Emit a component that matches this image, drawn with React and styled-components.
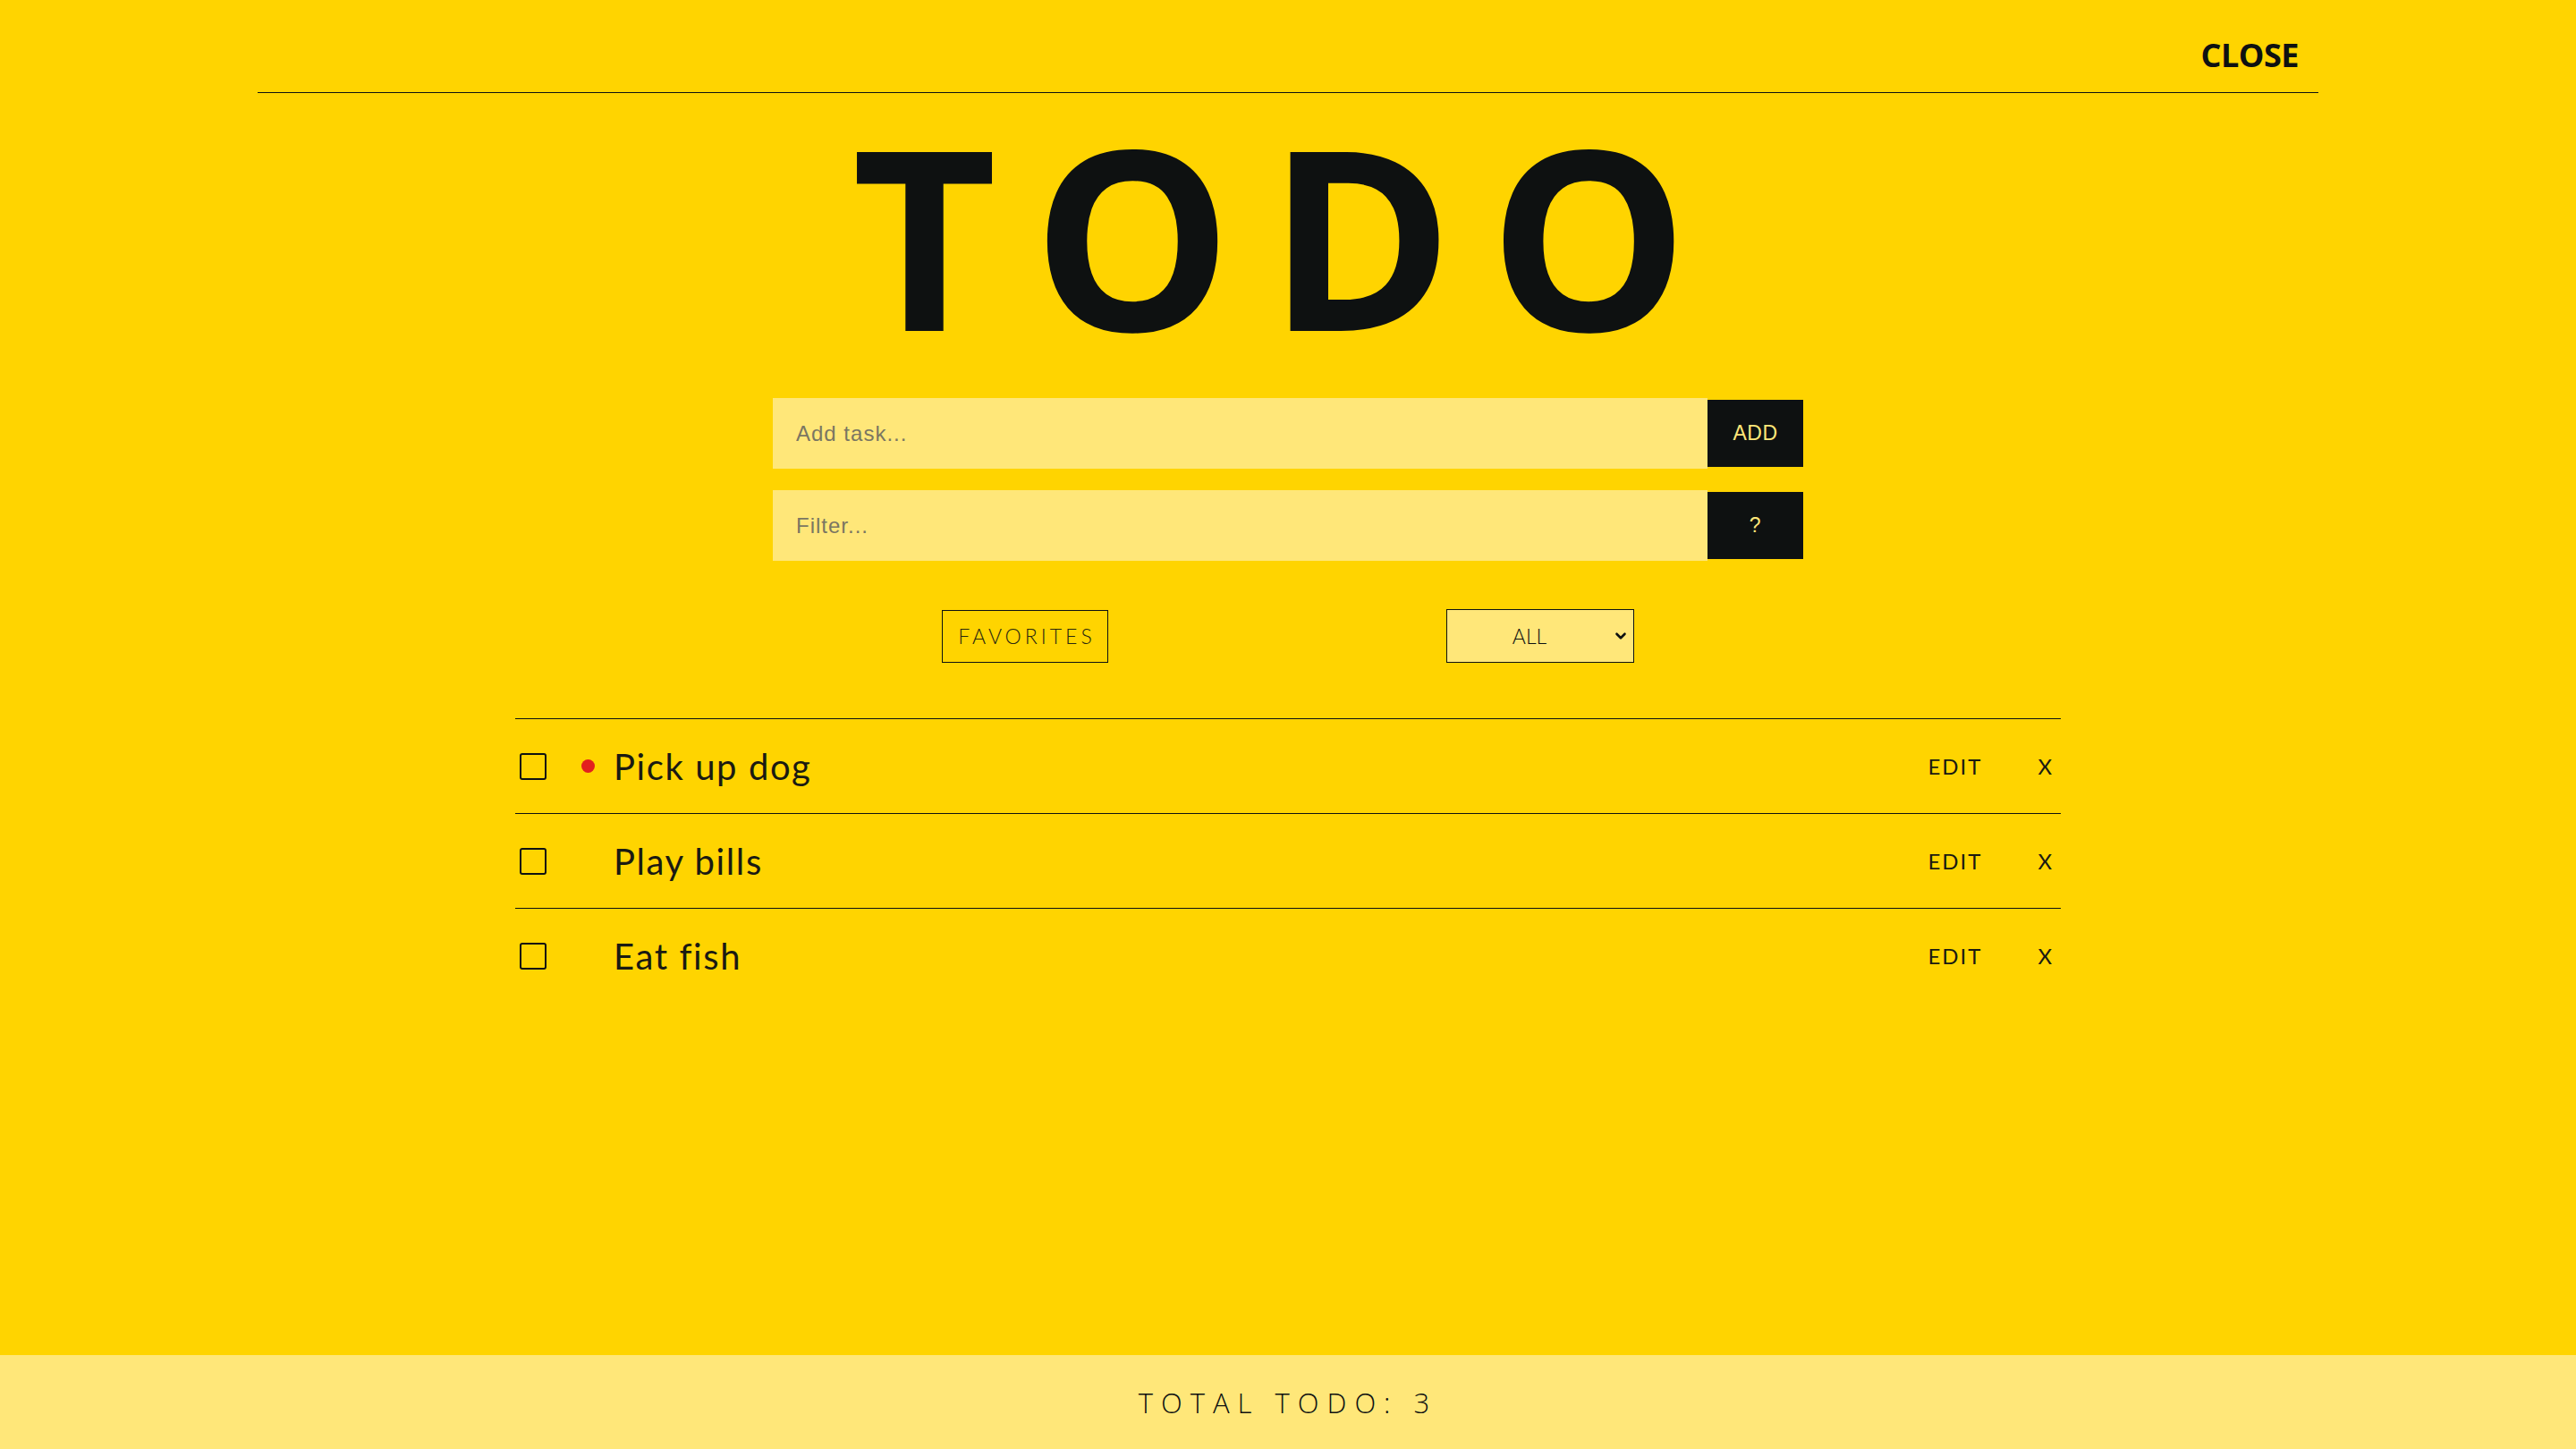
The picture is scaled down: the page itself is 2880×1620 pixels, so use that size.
import React from "react";
import styled, { createGlobalStyle } from "styled-components";
import { ChevronDown } from "lucide-react";

const GlobalStyle = createGlobalStyle`
  body {
    margin: 0;
    background-color: #ffd400;
    font-family: "Lato", "Open Sans", sans-serif;
    color: #0e1111;
  }
`;

const Page = styled.div`
  min-height: 100vh;
  display: flex;
  flex-direction: column;
`;

const Header = styled.header`
  width: 80%;
  height: 104px;
  margin: 0 auto;
  box-sizing: border-box;
  padding: 20px 22px 0 0;
  display: flex;
  justify-content: flex-end;
  align-items: center;
  border-bottom: 1px solid #0e1111;
`;

const CloseButton = styled.button`
  background: none;
  border: none;
  padding: 0;
  cursor: pointer;
  font-family: "Open Sans", sans-serif;
  font-weight: 700;
  font-size: 36px;
  letter-spacing: -0.5px;
  color: #0e1111;
`;

const Title = styled.h1`
  margin: 18px 0 0;
  text-align: center;
  font-family: "Open Sans", sans-serif;
  font-weight: 700;
  font-size: 280px;
  line-height: 1;
  letter-spacing: 40px;
  color: #0e1111;
`;

const Form = styled.div`
  width: 40%;
  margin: 43px auto 0;
  display: flex;
  flex-direction: column;
  gap: 24px;
`;

const FieldRow = styled.div`
  display: flex;
  align-items: center;
`;

const TextInput = styled.input`
  flex: 1;
  height: 79px;
  box-sizing: border-box;
  border: none;
  outline: none;
  padding: 0 26px;
  background-color: #ffe779;
  font-family: "Liberation Sans", Arial, sans-serif;
  font-size: 24px;
  letter-spacing: 1px;
  color: #0e1111;
  &::placeholder {
    color: #7a7662;
  }
`;

const SquareButton = styled.button`
  width: 107px;
  height: 75px;
  border: none;
  background-color: #0e1111;
  color: #ffe779;
  font-family: "Liberation Sans", Arial, sans-serif;
  font-size: 23px;
  letter-spacing: 0.5px;
  cursor: pointer;
`;

const Controls = styled.div`
  width: 40%;
  margin: 54px auto 0;
  display: flex;
  justify-content: space-around;
  align-items: center;
`;

const FavoritesButton = styled.button`
  width: 186px;
  height: 59px;
  border: 1px solid #0e1111;
  background: transparent;
  font-family: "Lato", sans-serif;
  font-weight: 300;
  font-size: 23px;
  letter-spacing: 4px;
  padding: 0 0 0 4px;
  color: #2a2810;
  cursor: pointer;
`;

const SelectWrap = styled.div`
  position: relative;
  width: 210px;
  height: 60px;
`;

const FilterSelect = styled.select`
  appearance: none;
  width: 100%;
  height: 100%;
  box-sizing: border-box;
  border: 1px solid #0e1111;
  border-radius: 0;
  padding: 0 24px 0 0;
  background-color: #ffe779;
  font-family: "Lato", sans-serif;
  font-weight: 300;
  font-size: 23px;
  text-align: center;
  text-align-last: center;
  color: #0e1111;
`;

const SelectArrow = styled(ChevronDown)`
  position: absolute;
  right: 6px;
  top: 50%;
  transform: translateY(-50%);
  pointer-events: none;
  color: #0e1111;
`;

const List = styled.ul`
  width: 60%;
  margin: 62px auto 0;
  padding: 0;
  list-style: none;
`;

const Row = styled.li`
  height: 106px;
  box-sizing: border-box;
  border-top: 1px solid #0e1111;
  padding: 0 10px 0 5px;
  display: flex;
  align-items: center;
`;

const Check = styled.input`
  appearance: none;
  width: 30px;
  height: 30px;
  margin: 0;
  border: 2px solid #0e1111;
  border-radius: 3px;
  background: transparent;
  cursor: pointer;
`;

const Dot = styled.span`
  width: 15px;
  height: 15px;
  margin-left: 39px;
  border-radius: 50%;
  background-color: ${(props) => (props.$visible ? "#e3201e" : "transparent")};
`;

const ItemText = styled.span`
  flex: 1;
  margin-left: 21px;
  font-family: "Lato", sans-serif;
  font-weight: 400;
  font-size: 40px;
  letter-spacing: 1.6px;
  color: #1a1a12;
`;

const Actions = styled.div`
  display: flex;
  align-items: center;
  gap: 62px;
`;

const ActionButton = styled.button`
  background: none;
  border: none;
  padding: 0;
  font-family: "Lato", sans-serif;
  font-weight: 400;
  font-size: 24px;
  letter-spacing: ${(props) => (props.$wide ? "2px" : "0")};
  color: #1a1a12;
  cursor: pointer;
`;

const Footer = styled.footer`
  margin-top: auto;
  height: 105px;
  display: flex;
  justify-content: center;
  align-items: center;
  background-color: #ffe779;
  font-family: "Open Sans", sans-serif;
  font-weight: 300;
  font-size: 31px;
  letter-spacing: 9px;
  color: #0e1111;
`;

const todos = [
  { id: 1, text: "Pick up dog", favorite: true },
  { id: 2, text: "Play bills", favorite: false },
  { id: 3, text: "Eat fish", favorite: false },
];

const App = () => {
  return (
    <Page>
      <GlobalStyle />
      <Header>
        <CloseButton>CLOSE</CloseButton>
      </Header>
      <Title>TODO</Title>
      <Form>
        <FieldRow>
          <TextInput placeholder="Add task..." />
          <SquareButton>ADD</SquareButton>
        </FieldRow>
        <FieldRow>
          <TextInput placeholder="Filter..." />
          <SquareButton>?</SquareButton>
        </FieldRow>
      </Form>
      <Controls>
        <FavoritesButton>FAVORITES</FavoritesButton>
        <SelectWrap>
          <FilterSelect defaultValue="all">
            <option value="all">ALL</option>
            <option value="done">DONE</option>
            <option value="todo">TODO</option>
          </FilterSelect>
          <SelectArrow size={18} strokeWidth={3.5} />
        </SelectWrap>
      </Controls>
      <List>
        {todos.map((todo) => (
          <Row key={todo.id}>
            <Check type="checkbox" />
            <Dot $visible={todo.favorite} />
            <ItemText>{todo.text}</ItemText>
            <Actions>
              <ActionButton $wide>EDIT</ActionButton>
              <ActionButton>X</ActionButton>
            </Actions>
          </Row>
        ))}
      </List>
      <Footer>TOTAL TODO: {todos.length}</Footer>
    </Page>
  );
};

export default App;
